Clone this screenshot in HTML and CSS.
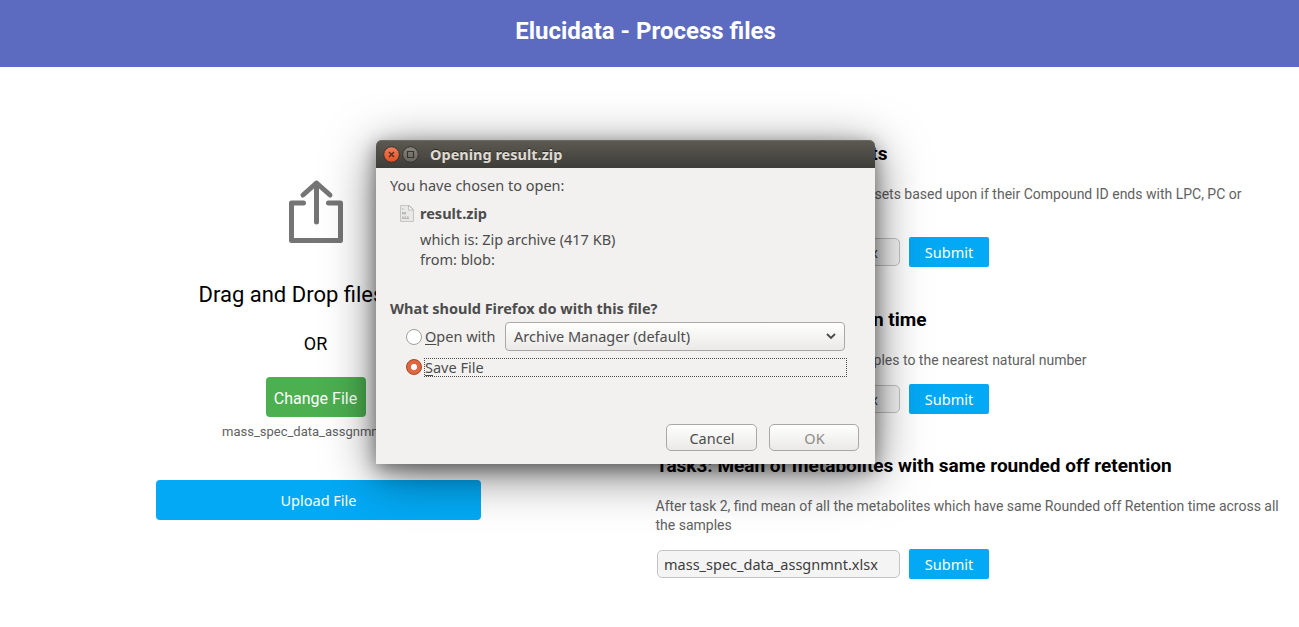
FILE: index.html
```
<!DOCTYPE html>
<html lang="en">
<head>
<meta charset="utf-8">
<title>Elucidata - Process files</title>
<link rel="stylesheet" href="styles.css">
</head>
<body>
<header class="header"><h1 class="header-title">Elucidata - Process files</h1></header>
<main class="content">
  <section class="upload">
    <div class="drop">
      <svg class="share-icon" width="56" height="66" viewBox="0 0 56 66" fill="none" stroke="#757575" stroke-width="5" stroke-linecap="round" stroke-linejoin="round">
        <path d="M15.500 24H3.500v37.500h49V24H40.500M28.500 43V4M15 16L28.500 4L42 16"/>
      </svg>
      <p class="drop-title">Drag and Drop files here</p>
      <p class="drop-or">OR</p>
      <button class="change">Change File</button>
      <p class="file-name">mass_spec_data_assgnmnt.xlsx</p>
    </div>
    <button class="upload-button">Upload File</button>
  </section>
  <section class="tasks">
    <article class="task">
      <h2 class="task-title first-title">Task1: Find child datasets</h2>
      <p class="task-text first-text">Filter metabolites into 3 child datasets based upon if their Compound ID ends with LPC, PC or</p>
      <div class="task-form first-form"><input class="field ui" value="mass_spec_data_assgnmnt.xlsx" readonly><button class="submit ui">Submit</button></div>
    </article>
    <article class="task">
      <h2 class="task-title second-title">Task2: Round off Retention time</h2>
      <p class="task-text second-text">Round off Retention time for all samples to the nearest natural number</p>
      <div class="task-form"><input class="field ui" value="mass_spec_data_assgnmnt.xlsx" readonly><button class="submit ui">Submit</button></div>
    </article>
    <article class="task">
      <h2 class="task-title">Task3: Mean of metabolites with same rounded off retention</h2>
      <p class="task-text">After task 2, find mean of all the metabolites which have same Rounded off Retention time across all<br>the samples</p>
      <div class="task-form"><input class="field ui" value="mass_spec_data_assgnmnt.xlsx" readonly><button class="submit ui">Submit</button></div>
    </article>
  </section>
</main>
<div class="dialog ui" role="dialog">
  <div class="titlebar">
    <svg class="window-buttons" width="36" height="18" viewBox="0 0 36 18">
      <defs>
        <linearGradient id="closeFill" x2="0" y2="1"><stop stop-color="#f37e5c"/><stop offset="1" stop-color="#e2511f"/></linearGradient>
        <linearGradient id="maxFill" x2="0" y2="1"><stop stop-color="#87857c"/><stop offset="1" stop-color="#66645d"/></linearGradient>
      </defs>
      <circle cx="8.500" cy="9.500" r="7.800" fill="url(#closeFill)" stroke="#35342f"/>
      <path d="M6 7l5 5M11 7l-5 5" stroke="#4b2a1e" stroke-width="1.200"/>
      <circle cx="27.500" cy="9.500" r="7.800" fill="url(#maxFill)" stroke="#35342f"/>
      <path d="M24.500 6.500h6v6h-6z" fill="none" stroke="#35342f" stroke-width="1.200"/>
    </svg>
    <span class="dialog-title">Opening result.zip</span>
  </div>
  <div class="dialog-body">
    <p class="line intro">You have chosen to open:</p>
    <div class="file-row">
      <svg width="14" height="17" viewBox="0 0 14 17">
        <path d="M.5.5h9l4 4v12H.5z" fill="#e8e8e6" stroke="#c6c5c2"/>
        <path d="M8.500.5v4.500h5z" fill="#fafafa" stroke="#b6b5b1" stroke-width=".8"/>
        <path d="M2 4h1.500M2 7.500h1.500M4.500 7.500H6M2 12h1.500M4.500 12H6M7 12h1.500M2 8.800h4M2 13.300h7" stroke="#aaa9a5"/>
      </svg>
      <strong class="file-title">result.zip</strong>
    </div>
    <p class="line detail which">which is: Zip archive (417 KB)</p>
    <p class="line detail from">from: blob:</p>
    <p class="line question">What should Firefox do with this file?</p>
    <div class="choice open">
      <span class="radio"></span><span class="open-label"><u>O</u>pen with</span>
      <div class="select"><span class="select-text">Archive Manager (default)</span>
        <svg width="12" height="8" viewBox="0 0 12 8" fill="none" stroke="#4a4a48" stroke-width="1.800"><path d="M2 2l4 4 4-4"/></svg>
      </div>
    </div>
    <div class="choice save">
      <span class="radio checked"></span><span class="save-label"><span class="save-text"><u>S</u>ave File</span></span>
    </div>
    <div class="actions"><button class="action cancel">Cancel</button><button class="action ok">OK</button></div>
  </div>
</div>
</body>
</html>
```
FILE: styles.css
```
* { box-sizing: border-box; }
body { margin: 0; height: 627px; overflow: hidden; background: #fff; font-family: Roboto, sans-serif; color: #000; }
h1, h2, p { margin: 0; font-size: inherit; }
button { border: 0; padding: 0; font-family: inherit; }
.ui { font-family: "Noto Sans", sans-serif; font-size: 14.5px; }
.header { height: 67px; background: #5c6bc0; padding: 17px 8px 0 0; text-align: center; }
.header-title { color: #fff; font-size: 24px; line-height: 28px; font-weight: 700; }
.content { display: flex; height: 560px; }
.upload { width: 655px; padding: 112px 174px 0 156px; }
.drop { width: 319px; height: 301px; display: flex; flex-direction: column; align-items: center; white-space: nowrap; }
.share-icon { flex: none; }
.drop-title { font-size: 22px; line-height: 26px; margin-top: 37px; }
.drop-or { font-size: 18px; line-height: 22px; margin-top: 25px; }
.change { width: 100px; height: 40px; flex: none; margin-top: 22px; border-radius: 4px; background: #4caf50; color: #fff; font-size: 16px; padding-top: 3px; }
.file-name { font-size: 13px; line-height: 16px; margin-top: 7px; color: #616161; }
.upload-button { display: block; width: 325px; height: 40px; border-radius: 4px; background: #03a9f4; color: #fff; font-family: "Noto Sans", sans-serif; font-size: 14.5px; }
.tasks { width: 644px; padding: 76px 0 0 .5px; }
.task { height: 166px; display: flex; flex-direction: column; }
.task:nth-child(2) { height: 146px; }
.task-title { font-size: 19px; line-height: 22px; font-weight: 700; white-space: nowrap; padding-left: .5px; }
.first-title { width: 232px; display: flex; justify-content: flex-end; }
.second-title { width: 271px; display: flex; justify-content: flex-end; }
.task-text { margin-top: 20px; font-size: 14px; line-height: 19px; color: #616161; white-space: nowrap; }
.first-text { width: 586px; text-align: right; }
.second-text { width: 431px; display: flex; justify-content: flex-end; }
.task-form { display: flex; align-items: center; gap: 9px; margin: 14px 0 0 1.5px; }
.first-form { margin-top: 33px; }
.field { width: 243px; height: 28px; border: 1px solid #c3c3c3; border-radius: 5px; background: #f4f4f4; color: #3c3c3c; padding: 0 6px; }
.submit { width: 80px; height: 30px; border-radius: 2px; background: #03a9f4; color: #fff; }
.dialog { position: absolute; left: 376px; top: 140px; width: 499px; height: 324px; border-radius: 6px 6px 0 0; background: #f2f1f0; color: #4c4c4c; box-shadow: 0 10px 50px rgba(0,0,0,.55), 0 5px 18px rgba(0,0,0,.4); white-space: nowrap; }
.titlebar { height: 28px; border-radius: 6px 6px 0 0; background: linear-gradient(#5c5a52, #3e3d38); box-shadow: inset 0 1px #6c6a62; display: flex; align-items: center; padding-left: 7px; gap: 11px; }
.dialog-title { color: #dfdbd2; font-weight: 700; text-shadow: 0 -1px #292824; }
.dialog-body { padding: 7px 16px 0 14px; }
.line { line-height: 20px; }
.file-row { display: flex; align-items: center; gap: 6px; height: 20px; margin: 8px 0 0 10px; }
.detail { margin-left: 30px; }
.which { margin-top: 6px; }
.question { margin-top: 29px; font-weight: 700; }
.choice { display: flex; align-items: center; padding-left: 16px; }
.open { height: 30px; margin-top: 3px; }
.radio { width: 16px; height: 16px; flex: none; border: 1px solid #a09f9c; border-radius: 50%; background: #fff; margin-right: 3px; }
.open .radio { position: relative; top: 1px; }
.checked { border-color: #a64322; background: radial-gradient(circle, #fff 0 2.700px, #df6840 3.500px); }
.choice u { text-underline-offset: 2px; text-decoration-skip-ink: none; }
.open-label { width: 80px; }
.select { width: 340px; height: 29px; flex: none; display: flex; align-items: center; justify-content: space-between; padding: 0 7px 0 8px; border: 1px solid #aaa8a5; border-radius: 4px; background: linear-gradient(#fff, #eae9e7); }
.save { height: 19px; margin-top: 7px; }
.save .radio { margin-right: 2px; position: relative; top: -1px; }
.save-label { width: 423px; height: 19px; line-height: 17px; border: 1px dotted #4c4c4c; }
.actions { display: flex; justify-content: flex-end; gap: 12px; margin-top: 47px; }
.action { width: 91px; height: 27px; border: 1px solid #aaa8a5; border-radius: 5px; background: linear-gradient(#fff, #eae9e7); color: #4c4c4c; font-size: 14.500px; padding-left: 1px; }
.ok { width: 90px; color: #8d8c88; }
```
